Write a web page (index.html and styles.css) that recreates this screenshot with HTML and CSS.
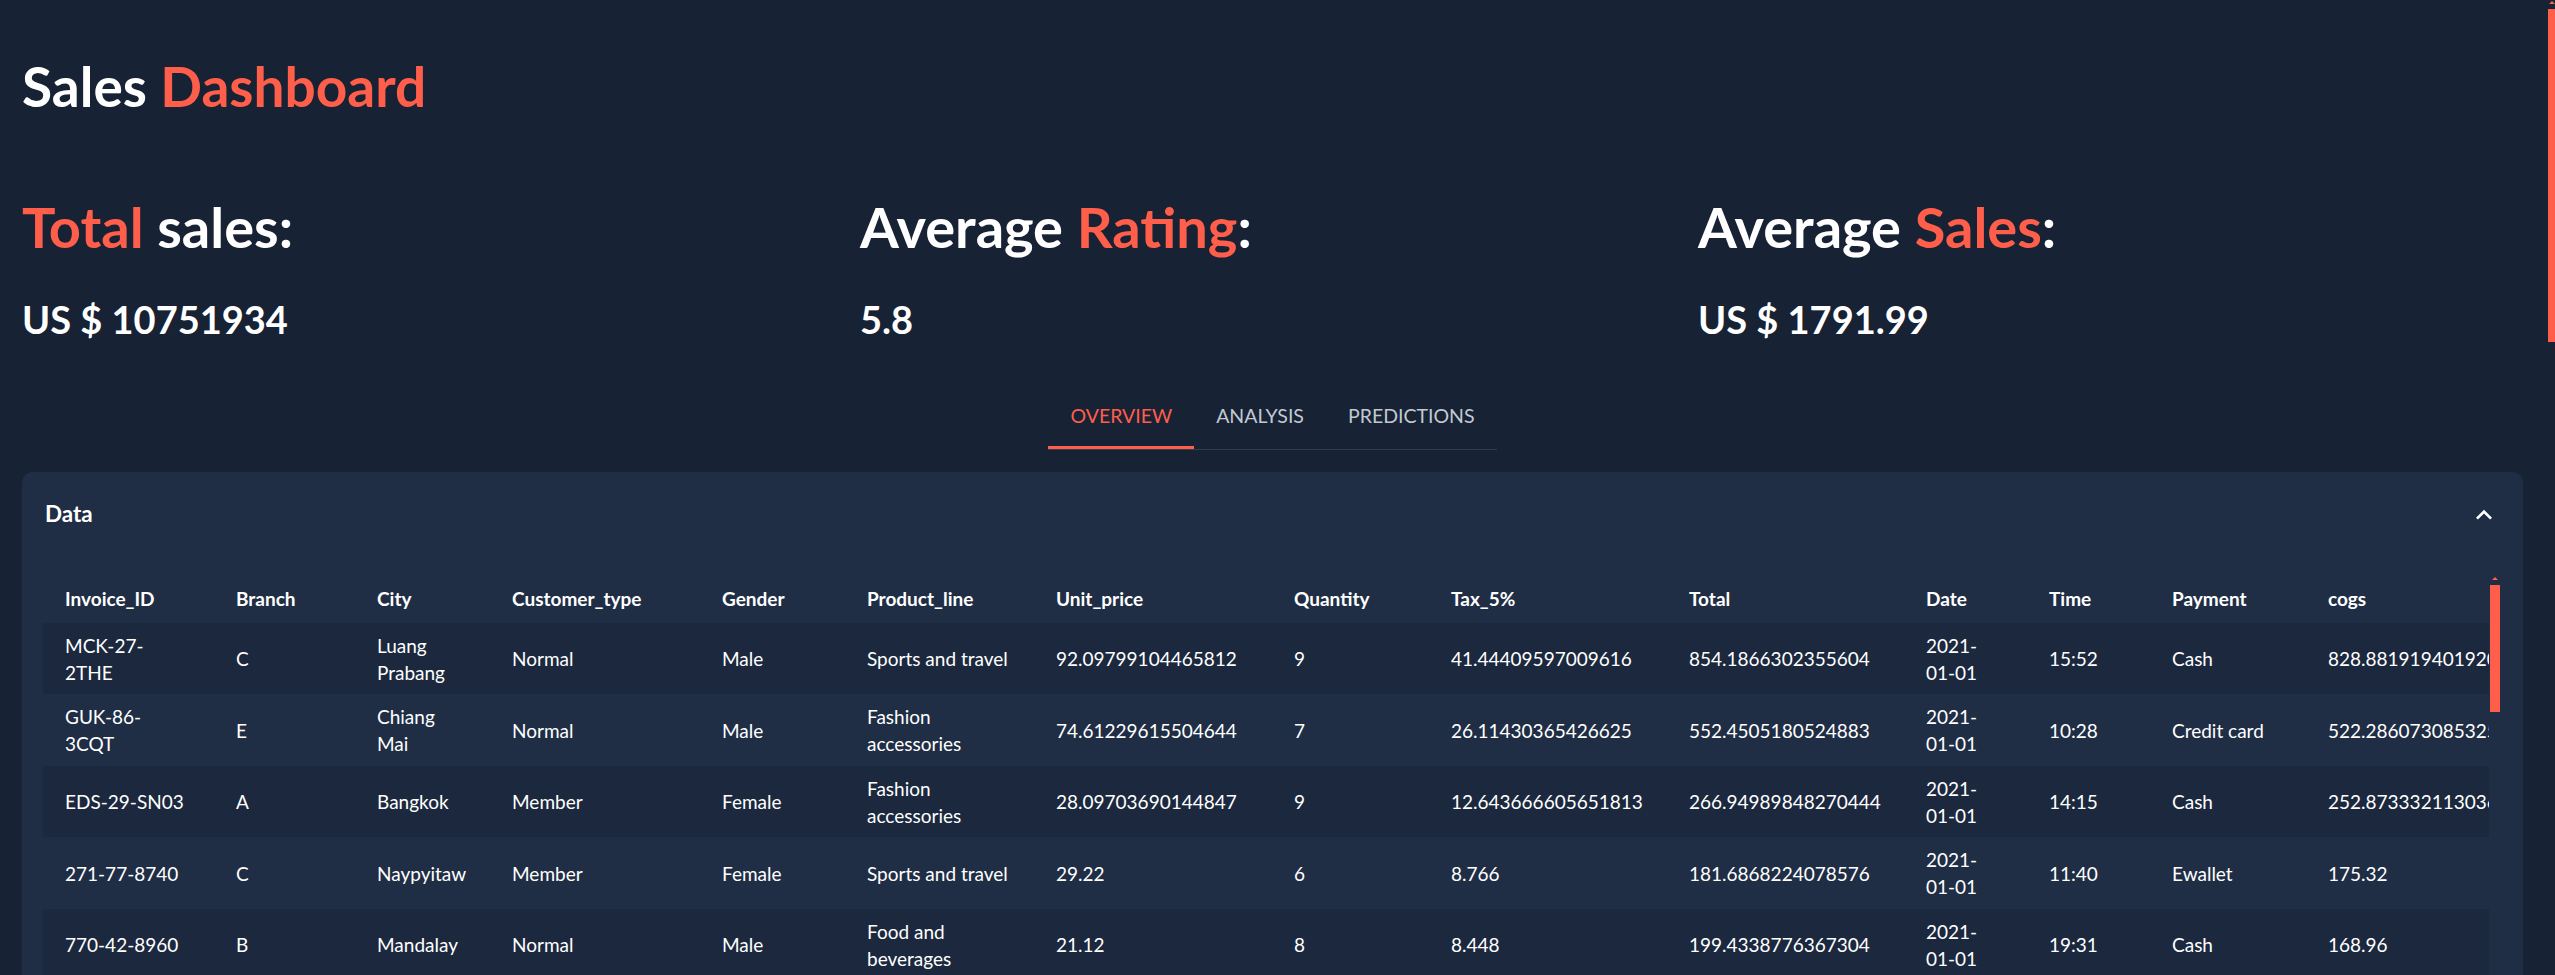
FILE: index.html
```html
<!DOCTYPE html>
<html lang="en">
<head>
<meta charset="utf-8">
<title>Sales Dashboard</title>
<link rel="stylesheet" href="styles.css">
</head>
<body>
<div class="page">
  <h1 class="title">Sales <span class="accent">Dashboard</span></h1>

  <div class="stats">
    <div class="stat">
      <h2 class="stat-label"><span class="accent">Total</span> sales:</h2>
      <p class="stat-value">US $ 10751934</p>
    </div>
    <div class="stat">
      <h2 class="stat-label">Average <span class="accent">Rating</span>:</h2>
      <p class="stat-value">5.8</p>
    </div>
    <div class="stat">
      <h2 class="stat-label">Average <span class="accent">Sales</span>:</h2>
      <p class="stat-value">US $ 1791.99</p>
    </div>
  </div>

  <div class="tabs-wrap">
    <div class="tabs">
      <button class="tab active">Overview</button>
      <button class="tab">Analysis</button>
      <button class="tab">Predictions</button>
    </div>
  </div>

  <section class="card">
    <div class="card-head">
      <span class="card-title">Data</span>
      <svg class="chevron" viewBox="0 0 24 24" width="32" height="32"><path d="M12 8l-6 6 1.41 1.41L12 10.83l4.59 4.58L18 14z" fill="#ffffff"/></svg>
    </div>
    <div class="card-body">
      <div class="table-frame">
        <div class="table-wrap">
          <table class="data">
            <colgroup>
              <col class="c-id"><col class="c-branch"><col class="c-city"><col class="c-ctype"><col class="c-gender"><col class="c-pline"><col class="c-uprice"><col class="c-qty"><col class="c-tax"><col class="c-total"><col class="c-date"><col class="c-time"><col class="c-pay"><col class="c-cogs"><col class="c-gmp"><col class="c-gi"><col class="c-rating">
            </colgroup>
            <thead>
              <tr><th>Invoice_ID</th><th>Branch</th><th>City</th><th>Customer_type</th><th>Gender</th><th>Product_line</th><th>Unit_price</th><th>Quantity</th><th>Tax_5%</th><th>Total</th><th>Date</th><th>Time</th><th>Payment</th><th>cogs</th><th>gross_margin_percentage</th><th>gross_income</th><th>Rating</th></tr>
            </thead>
            <tbody>
              <tr><td class="id">MCK-27-2THE</td><td>C</td><td>Luang Prabang</td><td>Normal</td><td>Male</td><td>Sports and travel</td><td>92.09799104465812</td><td>9</td><td>41.44409597009616</td><td>854.1866302355604</td><td class="date">2021-01-01</td><td>15:52</td><td>Cash</td><td>828.8819194019203</td><td>4.761904762</td><td>41.44409597009616</td><td>6.4</td></tr>
              <tr><td class="id">GUK-86-3CQT</td><td>E</td><td>Chiang Mai</td><td>Normal</td><td>Male</td><td>Fashion accessories</td><td>74.61229615504644</td><td>7</td><td>26.11430365426625</td><td>552.4505180524883</td><td class="date">2021-01-01</td><td>10:28</td><td>Credit card</td><td>522.2860730853251</td><td>4.761904762</td><td>26.11430365426625</td><td>5.1</td></tr>
              <tr><td class="id">EDS-29-SN03</td><td>A</td><td>Bangkok</td><td>Member</td><td>Female</td><td>Fashion accessories</td><td>28.09703690144847</td><td>9</td><td>12.643666605651813</td><td>266.94989848270444</td><td class="date">2021-01-01</td><td>14:15</td><td>Cash</td><td>252.87333211303625</td><td>4.761904762</td><td>12.643666605651813</td><td>7.3</td></tr>
              <tr><td class="id">271-77-8740</td><td>C</td><td>Naypyitaw</td><td>Member</td><td>Female</td><td>Sports and travel</td><td>29.22</td><td>6</td><td>8.766</td><td>181.6868224078576</td><td class="date">2021-01-01</td><td>11:40</td><td>Ewallet</td><td>175.32</td><td>4.761904762</td><td>8.766</td><td>5</td></tr>
              <tr><td class="id">770-42-8960</td><td>B</td><td>Mandalay</td><td>Normal</td><td>Male</td><td>Food and beverages</td><td>21.12</td><td>8</td><td>8.448</td><td>199.4338776367304</td><td class="date">2021-01-01</td><td>19:31</td><td>Cash</td><td>168.96</td><td>4.761904762</td><td>8.448</td><td>6.3</td></tr>
              <tr><td class="id">KLN-41-7QPD</td><td>A</td><td>Vientiane</td><td>Member</td><td>Female</td><td>Home and lifestyle</td><td>63.56</td><td>4</td><td>12.712</td><td>266.952</td><td class="date">2021-01-02</td><td>12:05</td><td>Ewallet</td><td>254.24</td><td>4.761904762</td><td>12.712</td><td>8.2</td></tr>
              <tr><td class="id">632-90-0281</td><td>B</td><td>Yangon</td><td>Normal</td><td>Male</td><td>Electronic accessories</td><td>47.38</td><td>5</td><td>11.845</td><td>248.745</td><td class="date">2021-01-02</td><td>16:44</td><td>Credit card</td><td>236.9</td><td>4.761904762</td><td>11.845</td><td>6.9</td></tr>
              <tr><td class="id">TRX-58-2MKA</td><td>D</td><td>Phnom Penh</td><td>Member</td><td>Female</td><td>Health and beauty</td><td>85.39</td><td>7</td><td>29.8865</td><td>627.6165</td><td class="date">2021-01-02</td><td>18:20</td><td>Cash</td><td>597.73</td><td>4.761904762</td><td>29.8865</td><td>4.1</td></tr>
            </tbody>
          </table>
        </div>
        <div class="vscroll" aria-hidden="true"><span class="vs-arrow"></span><span class="vs-thumb"></span></div>
      </div>
    </div>
  </section>
</div>
<div class="page-scroll" aria-hidden="true"><span class="ps-arrow"></span><span class="ps-thumb"></span></div>
</body>
</html>
```

FILE: styles.css
```css
body {
  margin: 0;
  background: #172234;
  color: #ffffff;
  font-family: Lato, "Open Sans", "Liberation Sans", sans-serif;
}
.page {
  width: 2501px;
  padding: 53px 22px 0;
}
.accent {
  color: #ff5e4b;
}
.title {
  margin: 0;
  font-size: 55px;
  line-height: 1.2;
  font-weight: 700;
}
.stats {
  display: grid;
  grid-template-columns: repeat(3, 1fr);
  column-gap: 13px;
  margin-top: 74px;
}
.stat-label {
  margin: 0;
  font-size: 56px;
  line-height: 1.2;
  font-weight: 700;
}
.stat-value {
  margin: 37px 0 0;
  font-size: 38px;
  line-height: 1.2;
  font-weight: 700;
}
.tabs-wrap {
  display: flex;
  justify-content: center;
  margin-top: 49px;
}
.tabs {
  display: flex;
  border-bottom: 1px solid #333c4e;
}
.tab {
  background: none;
  border: 0;
  border-bottom: 3px solid transparent;
  padding: 11px 22px 18px;
  font-family: inherit;
  font-size: 19.5px;
  line-height: 25px;
  font-weight: 400;
  text-transform: uppercase;
  color: #c3c9d2;
  cursor: pointer;
}
.tab.active {
  color: #ff5e4b;
  border-bottom-color: #ff5e4b;
}
.card {
  margin-top: 22px;
  background: #1f2e45;
  border-radius: 10px;
  overflow: hidden;
}
.card-head {
  display: flex;
  align-items: center;
  justify-content: space-between;
  height: 86px;
  padding: 0 23px;
}
.card-title {
  font-size: 22.4px;
  line-height: 1.2;
  font-weight: 700;
}
.chevron {
  display: block;
}
.card-body {
  padding: 10px 23px 24px 21px;
}
.table-frame {
  display: flex;
  height: 620px;
}
.table-wrap {
  flex: 1;
  min-width: 0;
  overflow: hidden;
}
.vscroll {
  width: 11px;
  flex: none;
  display: flex;
  flex-direction: column;
  align-items: flex-end;
  padding-top: 9px;
}
.vs-arrow {
  width: 0;
  height: 0;
  border-left: 3px solid transparent;
  border-right: 3px solid transparent;
  border-bottom: 3px solid #ff5e4b;
  margin-right: 2px;
}
.vs-thumb {
  width: 10px;
  height: 127px;
  margin-top: 5px;
  background: #ff5e4b;
}
.data {
  border-collapse: collapse;
  table-layout: fixed;
  width: 3180px;
  font-size: 19px;
  line-height: 27px;
}
.data th,
.data td {
  text-align: left;
  vertical-align: middle;
  padding: 9px 22px 8.5px;
  color: #ffffff;
}
.data th {
  font-weight: 700;
  padding: 17px 22px 11px;
}
.data td {
  font-weight: 400;
}
.data td.id {
  padding-right: 27px;
}
.data td.date {
  padding-right: 26px;
}
.data tbody tr:nth-child(odd) {
  background: #1b283e;
}
.c-id { width: 171px; }
.c-branch { width: 141px; }
.c-city { width: 135px; }
.c-ctype { width: 210px; }
.c-gender { width: 145px; }
.c-pline { width: 189px; }
.c-uprice { width: 238px; }
.c-qty { width: 157px; }
.c-tax { width: 238px; }
.c-total { width: 237px; }
.c-date { width: 123px; }
.c-time { width: 123px; }
.c-pay { width: 156px; }
.c-cogs { width: 240px; }
.c-gmp { width: 300px; }
.c-gi { width: 240px; }
.c-rating { width: 137px; }
.page-scroll {
  position: fixed;
  top: 0;
  right: 0;
  width: 7px;
  display: flex;
  flex-direction: column;
  align-items: center;
  padding-top: 1px;
}
.ps-arrow {
  width: 0;
  height: 0;
  border-left: 3px solid transparent;
  border-right: 3px solid transparent;
  border-bottom: 3px solid #ff5e4b;
}
.ps-thumb {
  width: 7px;
  height: 333px;
  margin-top: 5px;
  background: #ff5e4b;
}
```
